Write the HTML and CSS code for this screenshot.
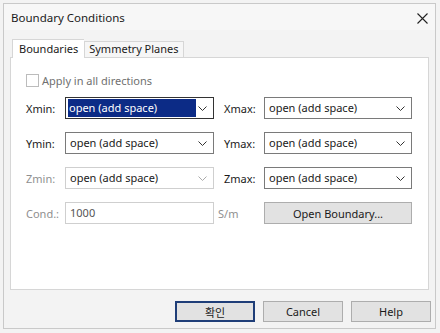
FILE: index.html
```html
<!DOCTYPE html>
<html lang="ko">
<head>
    <meta charset="UTF-8">
    <title>Boundary Conditions</title>
    <link rel="stylesheet" href="styles.css">
</head>
<body>
    <div class="window">
        <!-- Barra de título -->
        <div class="titlebar">
            <span class="title">Boundary Conditions</span>
            <svg class="close" width="11" height="11" viewBox="0 0 11 11">
                <path d="M0.5 0.5 L10.5 10.5 M10.5 0.5 L0.5 10.5" stroke="#222" stroke-width="1.1" fill="none"/>
            </svg>
        </div>

        <!-- Pestañas -->
        <div class="tabs">
            <div class="tab active">Boundaries</div>
            <div class="tab">Symmetry Planes</div>
        </div>

        <div class="panel">
            <label class="check">
                <span class="box"></span>
                Apply in all directions
            </label>

            <div class="grid">
                <span class="lbl">Xmin:</span>
                <div class="select focused">
                    <span class="value selected">open (add space)</span>
                    <svg class="arrow" width="9" height="5" viewBox="0 0 9 5"><path d="M0.5 0.5 L4.5 4.5 L8.5 0.5" stroke="#333" fill="none"/></svg>
                </div>
                <span class="lbl right">Xmax:</span>
                <div class="select">
                    <span class="value">open (add space)</span>
                    <svg class="arrow" width="9" height="5" viewBox="0 0 9 5"><path d="M0.5 0.5 L4.5 4.5 L8.5 0.5" stroke="#333" fill="none"/></svg>
                </div>

                <span class="lbl">Ymin:</span>
                <div class="select">
                    <span class="value">open (add space)</span>
                    <svg class="arrow" width="9" height="5" viewBox="0 0 9 5"><path d="M0.5 0.5 L4.5 4.5 L8.5 0.5" stroke="#333" fill="none"/></svg>
                </div>
                <span class="lbl right">Ymax:</span>
                <div class="select">
                    <span class="value">open (add space)</span>
                    <svg class="arrow" width="9" height="5" viewBox="0 0 9 5"><path d="M0.5 0.5 L4.5 4.5 L8.5 0.5" stroke="#333" fill="none"/></svg>
                </div>

                <span class="lbl disabled">Zmin:</span>
                <div class="select disabled">
                    <span class="value">open (add space)</span>
                    <svg class="arrow" width="9" height="5" viewBox="0 0 9 5"><path d="M0.5 0.5 L4.5 4.5 L8.5 0.5" stroke="#aaa" fill="none"/></svg>
                </div>
                <span class="lbl right">Zmax:</span>
                <div class="select">
                    <span class="value">open (add space)</span>
                    <svg class="arrow" width="9" height="5" viewBox="0 0 9 5"><path d="M0.5 0.5 L4.5 4.5 L8.5 0.5" stroke="#333" fill="none"/></svg>
                </div>

                <span class="lbl disabled">Cond.:</span>
                <div class="input">1000</div>
                <span class="lbl unit disabled">S/m</span>
                <button class="btn">Open Boundary...</button>
            </div>
        </div>

        <!-- Botones inferiores -->
        <div class="actions">
            <button class="btn default">확인</button>
            <button class="btn">Cancel</button>
            <button class="btn">Help</button>
        </div>
    </div>
</body>
</html>
```

FILE: styles.css
```css
/* General */
body {
    margin: 0;
    padding: 3px;
    background-color: #f3f3f3;
    font-family: 'Noto Sans', 'Noto Sans CJK KR', sans-serif;
    font-size: 11px;
    color: #1a1a1a;
}

.window {
    width: 433px;
    height: 326px;
    box-sizing: border-box;
    border: 1px solid #c9c9c9;
    background-color: #f3f3f3;
}

.titlebar {
    height: 26px;
    display: flex;
    align-items: center;
    justify-content: space-between;
    padding: 0 7px 0 7px;
    background-color: #f7f7f7;
}

.title {
    font-size: 11.5px;
}

.close {
    margin-top: 2px;
}

/* Pestañas */
.tabs {
    display: flex;
    align-items: flex-end;
    height: 17px;
    margin: 10px 0 0 8px;
}

.tab {
    height: 15px;
    line-height: 14px;
    padding: 0 4px;
    border: 1px solid #d6d6d6;
    border-bottom: none;
    background-color: #f6f6f6;
}

.tab.active {
    position: relative;
    height: 18px;
    line-height: 17px;
    margin-bottom: -1px;
    padding: 0 6px;
    border-right: none;
    background-color: #fff;
}

.panel {
    height: 233px;
    box-sizing: border-box;
    margin: 0 6px;
    padding: 16px 0 0 15px;
    border: 1px solid #d6d6d6;
    background-color: #fff;
}

.check {
    display: flex;
    align-items: center;
    gap: 3px;
    height: 13px;
    color: #707070;
}

.check .box {
    width: 11px;
    height: 11px;
    border: 1px solid #bcbcbc;
    background: #fff;
}

.disabled {
    color: #8f8f8f;
}

.grid {
    display: grid;
    grid-template-columns: 39px 149px 50px 148px;
    grid-auto-rows: 22px;
    row-gap: 13px;
    margin-top: 10px;
    align-items: center;
}

.lbl.right {
    padding-left: 10px;
}

.lbl.unit {
    padding-left: 4px;
}

.select {
    height: 22px;
    box-sizing: border-box;
    display: flex;
    align-items: center;
    justify-content: space-between;
    padding: 0 6px 0 3px;
    border: 1px solid #7a7a7a;
    background-color: #fff;
}

.select.focused {
    border-color: #333;
    padding-left: 2px;
}

.select .value {
    line-height: 18px;
    padding-left: 1px;
}

.select .value.selected {
    width: 127px;
    background-color: #0c2b86;
    color: #fff;
}

.select.disabled {
    border-color: #cfcfcf;
    color: #1a1a1a;
}

.input {
    height: 22px;
    box-sizing: border-box;
    padding-left: 4px;
    line-height: 20px;
    border: 1px solid #cfcfcf;
    color: #555;
}

.btn {
    height: 21px;
    padding: 0;
    font-family: inherit;
    font-size: 11px;
    color: #1a1a1a;
    border: 1px solid #adadad;
    background-color: #e2e2e2;
}

.grid .btn {
    height: 22px;
}

.actions {
    display: flex;
    justify-content: flex-end;
    gap: 8px;
    margin-top: 11px;
    padding-right: 4px;
}

.actions .btn {
    width: 80px;
}

.btn.default {
    border: 2px solid #1f3e78;
}
```
